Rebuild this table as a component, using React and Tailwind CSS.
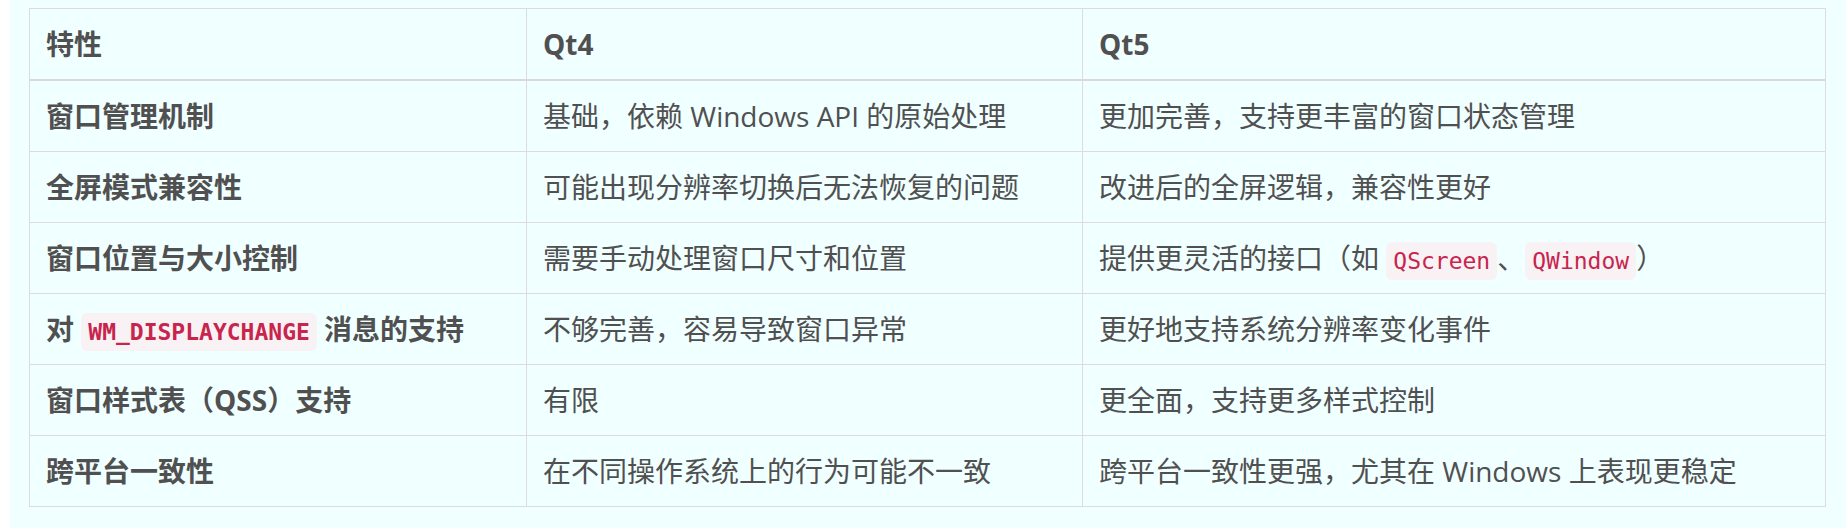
const rows = [
  {
    feature: ['窗口管理机制'],
    qt4: ['基础，依赖 Windows API 的原始处理'],
    qt5: ['更加完善，支持更丰富的窗口状态管理'],
  },
  {
    feature: ['全屏模式兼容性'],
    qt4: ['可能出现分辨率切换后无法恢复的问题'],
    qt5: ['改进后的全屏逻辑，兼容性更好'],
  },
  {
    feature: ['窗口位置与大小控制'],
    qt4: ['需要手动处理窗口尺寸和位置'],
    qt5: ['提供更灵活的接口（如 ', { code: 'QScreen' }, '、', { code: 'QWindow' }, '）'],
  },
  {
    feature: ['对 ', { code: 'WM_DISPLAYCHANGE' }, ' 消息的支持'],
    qt4: ['不够完善，容易导致窗口异常'],
    qt5: ['更好地支持系统分辨率变化事件'],
  },
  {
    feature: ['窗口样式表（QSS）支持'],
    qt4: ['有限'],
    qt5: ['更全面，支持更多样式控制'],
  },
  {
    feature: ['跨平台一致性'],
    qt4: ['在不同操作系统上的行为可能不一致'],
    qt5: ['跨平台一致性更强，尤其在 Windows 上表现更稳定'],
  },
];

const Code = ({ children }) => (
  <code className="rounded-[6px] bg-[#f9f2f4] px-[7px] py-[6px] font-['DejaVu_Sans_Mono',monospace] text-[23px] leading-none text-[#c7254e]">
    {children}
  </code>
);

const Cell = ({ parts, head, bold }) => {
  const Tag = head ? 'th' : 'td';
  return (
    <Tag
      className={`border border-[#dcdcdc] px-4 py-[14px] text-left align-middle leading-[42px] whitespace-nowrap ${
        head ? 'border-b-2 border-b-[#d9d9d9] font-bold' : bold ? 'font-bold' : 'font-normal'
      }`}
    >
      {parts.map((p, i) => (typeof p === 'string' ? <span key={i}>{p}</span> : <Code key={i}>{p.code}</Code>))}
    </Tag>
  );
};

export default function App() {
  return (
    <div className="flex h-[528px] w-[1846px] overflow-hidden bg-white">
      <div className="w-[10px] shrink-0 bg-white" />
      <div className="flex-1 bg-[#f0ffff] pl-[19px] pt-[8px] font-['Open_Sans','Noto_Sans_CJK_SC',sans-serif] text-[28px] text-[#505050]">
        <table className="w-[1796px] table-fixed border-collapse">
          <colgroup>
            <col className="w-[497px]" />
            <col className="w-[556px]" />
            <col className="w-[743px]" />
          </colgroup>
          <thead>
            <tr>
              <Cell head parts={['特性']} />
              <Cell head parts={['Qt4']} />
              <Cell head parts={['Qt5']} />
            </tr>
          </thead>
          <tbody>
            {rows.map((r, i) => (
              <tr key={i}>
                <Cell bold parts={r.feature} />
                <Cell parts={r.qt4} />
                <Cell parts={r.qt5} />
              </tr>
            ))}
          </tbody>
        </table>
      </div>
    </div>
  );
}
